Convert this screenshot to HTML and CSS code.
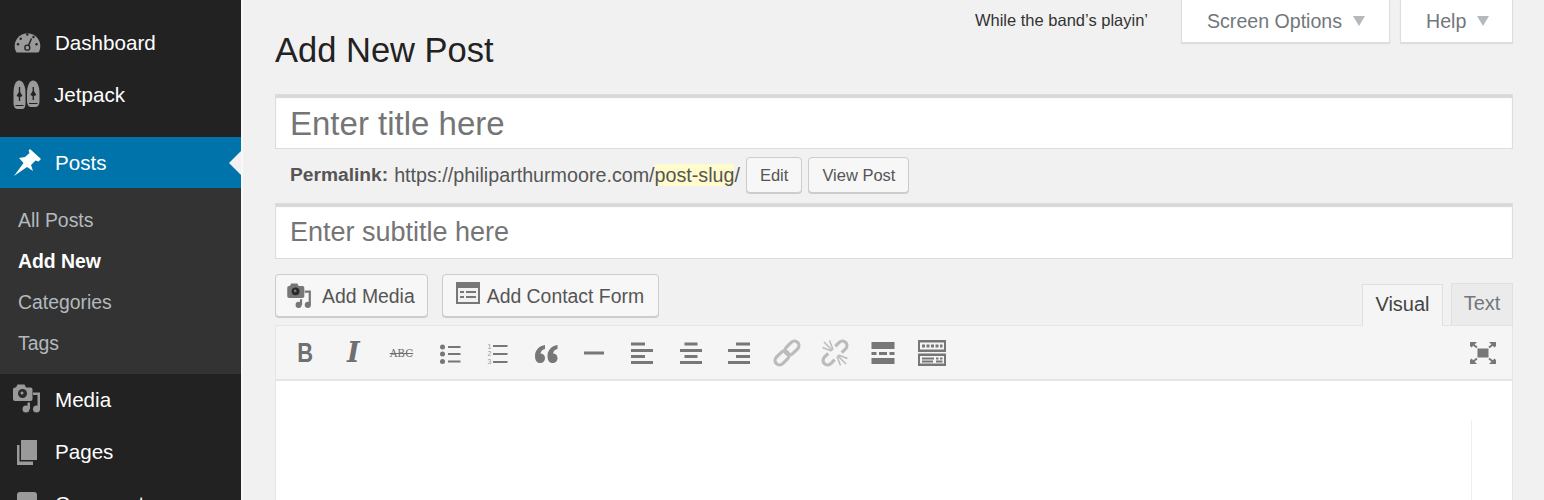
FILE: index.html
```html
<!DOCTYPE html>
<html lang="en">
<head>
    <meta charset="UTF-8">
    <meta name="viewport" content="width=device-width, initial-scale=1.0">
    <title>Add New Post</title>
    <link rel="stylesheet" href="styles.css">
</head>
<body>
    <svg class="defs" width="0" height="0">
        <symbol id="media" viewBox="0 0 28 32">
            <path d="M3 3.500 L4.500 0.500 H11.500 L13 3.500 H17.500 Q19.500 3.500 19.500 5.500 V15 Q19.500 17 17.500 17 H2 Q0 17 0 15 V5.500 Q0 3.500 2 3.500 Z"/>
            <circle cx="9.500" cy="9.500" r="4.500" fill="#2a2a2a"/>
            <circle cx="9" cy="9" r="1.500" fill="currentColor"/>
            <circle cx="13" cy="25" r="3.500"/>
            <path d="M14.500 25 V18.500 H17 V25 Z"/>
            <circle cx="23.500" cy="25" r="3.500"/>
            <path d="M24.500 25 V11 H20 V8.500 H27 V25 Z"/>
        </symbol>
    </svg>

    <div class="page">
        <nav class="sidebar">
            <a class="menu-item">
                <svg class="menu-icon" viewBox="0 0 28 28">
                    <path d="M4.500 23.500 Q3 23.500 2.700 22 A12.800 12.800 0 1 1 26.300 22 Q26 23.500 24.500 23.500 Z"/>
                    <g fill="#222">
                        <circle cx="14.300" cy="5.500" r="1.200"/>
                        <circle cx="7.700" cy="9.700" r="1.200"/>
                        <circle cx="20.500" cy="8" r="1.200"/>
                        <circle cx="5" cy="15.300" r="1.200"/>
                        <circle cx="23.500" cy="15.300" r="1.200"/>
                    </g>
                    <circle cx="14.300" cy="18.700" r="2.500" fill="none" stroke="#222" stroke-width="1.300"/>
                    <path d="M15.500 16.500 L18.500 9.500" stroke="#222" stroke-width="1.500"/>
                </svg>
                Dashboard
            </a>
            <a class="menu-item menu-jet">
                <svg class="menu-icon" viewBox="0 0 28 32">
                    <path d="M6 0.500 C10 0.500 12.500 6 12.500 13 V23 C12.500 26 11.500 29 9.500 29 H4 C2 29 0.500 26 0.500 23 V13 C0.500 6 2.500 0.500 6 0.500 Z"/>
                    <path d="M20 0.500 C24 0.500 26.500 6 26.500 13 V21 C26.500 24 25 27 23 27 H17.500 C15.500 27 14 24 14 21 V13 C14 6 16.500 0.500 20 0.500 Z"/>
                    <g fill="#222">
                        <path d="M5.800 7 H7.200 V21 H5.800 Z M3.500 16 L5.800 12 V17 Z M9.500 16 L7.200 12 V17 Z"/>
                        <path d="M19.600 7 H21 V20 H19.600 Z M17.300 15 L19.600 11 V16 Z M23.300 15 L21 11 V16 Z"/>
                        <path d="M2.500 25 H10.500 V26 H2.500 Z M16 23 H24.500 V24 H16 Z"/>
                    </g>
                </svg>
                Jetpack
            </a>

            <div class="menu-group">
                <a class="menu-item menu-current">
                    <svg class="menu-icon menu-pin" viewBox="0 0 28 28">
                        <path d="M17 0 L28 10 L25.500 12.500 L22.500 11.500 L18 16 L20 22 L14 18 L1 27 L10.500 14 L6 9 L12 8 L16.500 4 L15.500 1.500 Z"/>
                    </svg>
                    Posts
                </a>
                <div class="submenu">
                    <a>All Posts</a>
                    <a class="sub-current">Add New</a>
                    <a>Categories</a>
                    <a>Tags</a>
                </div>
            </div>

            <a class="menu-item">
                <svg class="menu-icon menu-media"><use href="#media"/></svg>
                Media
            </a>
            <a class="menu-item">
                <svg class="menu-icon" viewBox="0 0 28 28">
                    <path d="M8 2 H24 V22 H8 Z"/>
                    <path d="M4 7 H6.500 V23.500 H20 V27 H4 Z"/>
                </svg>
                Pages
            </a>
            <a class="menu-item">
                <svg class="menu-icon" viewBox="0 0 28 28">
                    <rect x="4" y="2" width="20" height="20" rx="3"/>
                </svg>
                Comments
            </a>
        </nav>

        <main class="content">
            <div class="top-row">
                <h1>Add New Post</h1>
                <p class="dolly">While the band’s playin’</p>
                <div class="screen-tab tab-options">Screen Options <span class="caret"></span></div>
                <div class="screen-tab tab-help">Help <span class="caret"></span></div>
            </div>

            <div class="field field-title">Enter title here</div>

            <div class="permalink">
                <strong>Permalink:</strong>
                <span class="url">https://philiparthurmoore.com/<span class="slug">post-slug</span>/</span>
                <button class="small-btn">Edit</button>
                <button class="small-btn">View Post</button>
            </div>

            <div class="field field-subtitle">Enter subtitle here</div>

            <div class="media-row">
                <button class="media-btn">
                    <svg class="btn-media"><use href="#media"/></svg>
                    Add Media
                </button>
                <button class="media-btn btn-form">
                    <svg class="form-icon" viewBox="0 0 24 22">
                        <rect width="24" height="22" fill="#777"/>
                        <rect x="2" y="6" width="20" height="14" fill="#f1f1f1"/>
                        <path d="M4 9 H8 V11 H4 Z M10 9 H20 V11 H10 Z M4 14 H8 V16 H4 Z M10 14 H20 V16 H10 Z" fill="#777"/>
                    </svg>
                    Add Contact Form
                </button>
                <div class="editor-tabs">
                    <span class="editor-tab tab-active">Visual</span>
                    <span class="editor-tab">Text</span>
                </div>
            </div>

            <div class="toolbar">
                <span class="tool tool-bold"><span>B</span></span>
                <span class="tool tool-italic">I</span>
                <span class="tool tool-strike">ABC</span>
                <span class="tool">
                    <svg viewBox="0 0 28 28">
                        <circle cx="6.500" cy="8" r="2.500"/><circle cx="6.500" cy="15" r="2.500"/><circle cx="6.500" cy="22.500" r="2.500"/>
                        <path d="M12 7 H24.500 V9 H12 Z M12 14 H24.500 V16 H12 Z M12 21.500 H24.500 V23.500 H12 Z"/>
                    </svg>
                </span>
                <span class="tool">
                    <svg viewBox="0 0 28 28">
                        <text class="ol-num" x="3.500" y="10">1</text>
                        <text class="ol-num" x="3.500" y="17">2</text>
                        <text class="ol-num" x="3.500" y="25">3</text>
                        <path d="M9 6 H23.500 V8 H9 Z M9 14 H23.500 V16 H9 Z M9 22 H23.500 V24 H9 Z"/>
                    </svg>
                </span>
                <span class="tool">
                    <svg viewBox="0 0 28 28">
                        <path d="M13 6 C7 7 3 11 3 17 C3 21.500 5 24 8 24 C11 24 13 22 13 19 C13 16 11 14.500 8.500 14.500 C9 12 10.500 10.500 13 10 Z"/>
                        <path d="M25.500 6 C19.500 7 15.500 11 15.500 17 C15.500 21.500 17.500 24 20.500 24 C23.500 24 25.500 22 25.500 19 C25.500 16 23.500 14.500 21 14.500 C21.500 12 23 10.500 25.500 10 Z"/>
                    </svg>
                </span>
                <span class="tool">
                    <svg viewBox="0 0 28 28"><rect x="4" y="12.500" width="20" height="3"/></svg>
                </span>
                <span class="tool">
                    <svg viewBox="0 0 28 28">
                        <path d="M3 3.500 H17 V6.500 H3 Z M3 10 H25 V13 H3 Z M3 16 H17 V19 H3 Z M3 22 H25 V25 H3 Z"/>
                    </svg>
                </span>
                <span class="tool">
                    <svg viewBox="0 0 28 28">
                        <path d="M7.500 3.500 H20.500 V6.500 H7.500 Z M3 10 H25 V13 H3 Z M7.500 16 H20.500 V19 H7.500 Z M3 22 H25 V25 H3 Z"/>
                    </svg>
                </span>
                <span class="tool">
                    <svg viewBox="0 0 28 28">
                        <path d="M11 3.500 H25 V6.500 H11 Z M3 10 H25 V13 H3 Z M11 16 H25 V19 H11 Z M3 22 H25 V25 H3 Z"/>
                    </svg>
                </span>
                <span class="tool">
                    <svg viewBox="0 0 28 28">
                        <g transform="rotate(-45 14 14)" fill="none" stroke="#bbb" stroke-width="3.200">
                            <rect x="-1" y="9.500" width="16" height="9" rx="4.500"/>
                            <rect x="13" y="9.500" width="16" height="9" rx="4.500"/>
                        </g>
                    </svg>
                </span>
                <span class="tool">
                    <svg viewBox="0 0 28 28">
                        <g transform="rotate(-45 14 14)" fill="none" stroke="#bbb" stroke-width="3.200">
                            <path d="M9 9.500 H3.500 A4.500 4.500 0 0 0 3.500 18.500 H9"/>
                            <path d="M19 9.500 H24.500 A4.500 4.500 0 0 1 24.500 18.500 H19"/>
                        </g>
                        <path d="M11.500 11.500 L3 3 M12 10.500 L8.500 1.500 M10.500 12 L1.500 8.500 M16.500 16.500 L25 25 M16 17.500 L19.500 26.500 M17.500 16 L26.500 19.500" stroke="#bbb" stroke-width="1.500"/>
                    </svg>
                </span>
                <span class="tool">
                    <svg viewBox="0 0 28 28">
                        <path d="M2.500 3 H25.500 V10 H2.500 Z M2.500 13 H7.500 V16 H2.500 Z M10 13 H18 V16 H10 Z M20.500 13 H25.500 V16 H20.500 Z M2.500 19 H25.500 V25 H2.500 Z"/>
                    </svg>
                </span>
                <span class="tool">
                    <svg viewBox="0 0 28 28">
                        <path fill-rule="evenodd" d="M0 1 H28 V13 H0 Z M2 3.500 V10.500 H26 V3.500 Z M0 14.500 H28 V27 H0 Z M2 17 V24.500 H26 V17 Z"/>
                        <path d="M4 5.500 H7 V8.500 H4 Z M8.500 5.500 H11.500 V8.500 H8.500 Z M13 5.500 H16 V8.500 H13 Z M17.500 5.500 H20.500 V8.500 H17.500 Z M22 5.500 H24.500 V8.500 H22 Z"/>
                        <path d="M4 18.500 H16 V20.500 H4 Z M18 18.500 H20.500 V20.500 H18 Z M22 18.500 H24.500 V20.500 H22 Z M4 21.500 H15 V23.500 H4 Z M18 21.500 H24.500 V23.500 H18 Z"/>
                    </svg>
                </span>
                <span class="tool tool-full">
                    <svg viewBox="0 0 28 28">
                        <rect x="8.500" y="9.500" width="11" height="9"/>
                        <path d="M8 8.500 L3.500 5 M20 8.500 L24.500 5 M8 19.500 L3.500 23 M20 19.500 L24.500 23" stroke="#777" stroke-width="2"/>
                        <path d="M1 3 H8 L2.500 8.500 L1 7 Z M27 3 H20 L25.500 8.500 L27 7 Z M1 25 H8 L2.500 19.500 L1 21 Z M27 25 H20 L25.500 19.500 L27 21 Z"/>
                    </svg>
                </span>
            </div>

            <div class="editor">
                <div class="editor-body"></div>
            </div>
        </main>
    </div>
</body>
</html>
```

FILE: styles.css
```css
html, body {
    margin: 0;
    height: 500px;
    overflow: hidden;
}
body {
    font-family: "Liberation Sans", Arial, sans-serif;
    background: #f1f1f1;
    color: #444;
}
.defs {
    position: absolute;
}
.page {
    display: flex;
    height: 500px;
}

/* sidebar */
.sidebar {
    flex: 0 0 241px;
    box-sizing: border-box;
    padding-top: 17px;
    background: #222;
    overflow: hidden;
}
.menu-item {
    display: flex;
    align-items: center;
    height: 52px;
    padding-left: 13px;
    color: #fff;
    font-size: 20.6px;
}
.menu-icon {
    flex: none;
    width: 28px;
    height: 28px;
    margin-right: 14px;
    fill: #9a9a9a;
    color: #9a9a9a;
}
.menu-jet .menu-icon {
    height: 32px;
    margin-top: 2px;
    margin-right: 13px;
}
.menu-media {
    height: 32px;
}
.menu-group {
    margin-top: 16px;
}
.menu-current {
    position: relative;
    height: 51px;
    background: #0073aa;
}
.menu-current::after {
    content: "";
    position: absolute;
    right: 0;
    top: 14px;
    border: 12px solid transparent;
    border-left: 0;
    border-right-color: #f1f1f1;
}
.menu-current .menu-pin {
    fill: #fff;
}
.submenu {
    display: flex;
    flex-direction: column;
    height: 186px;
    box-sizing: border-box;
    padding: 12px 0 11px 18px;
    background: #333;
    color: #b4b9be;
    font-size: 19.4px;
}
.submenu a {
    height: 41px;
    line-height: 41px;
}
.submenu .sub-current {
    color: #fff;
    font-weight: bold;
}

/* content */
.content {
    flex: 1;
    min-width: 0;
    box-sizing: border-box;
    padding: 0 31px 0 32px;
    border-left: 2px solid #f8f8f8;
}
.top-row {
    display: flex;
    align-items: flex-start;
    height: 94px;
}
h1 {
    flex: 1;
    margin: 30px 0 0;
    color: #222;
    font-size: 34.5px;
    font-weight: normal;
    line-height: 40px;
}
.dolly {
    margin: 11px 33px 0 0;
    color: #333;
    font-size: 16.5px;
    line-height: 19px;
}
.screen-tab {
    display: flex;
    align-items: center;
    gap: 11px;
    box-sizing: border-box;
    height: 43px;
    padding: 0 0 0 25px;
    background: #fff;
    border: 1px solid #ddd;
    border-top: 0;
    box-shadow: 0 1px 1px rgba(0, 0, 0, 0.08);
    color: #72777c;
    font-size: 19.6px;
    white-space: nowrap;
}
.tab-options {
    width: 209px;
    margin-right: 10px;
}
.tab-help {
    width: 113px;
}
.caret {
    border: 6.5px solid transparent;
    border-top: 10px solid #b4b9be;
    border-bottom: 0;
}

.field {
    box-sizing: border-box;
    padding-left: 14px;
    background: #fff;
    border: 1px solid #ddd;
    box-shadow: inset 0 3px 1px #d8d8d8;
    color: #757575;
}
.field-title {
    height: 55px;
    padding-top: 3px;
    font-size: 33px;
    line-height: 51px;
}
.field-subtitle {
    height: 56px;
    padding-top: 2px;
    font-size: 27px;
    line-height: 52px;
}
.permalink {
    display: flex;
    align-items: center;
    gap: 6px;
    box-sizing: border-box;
    height: 54px;
    padding: 0 0 2px 15px;
    color: #555;
    font-size: 19.2px;
}
.url {
    font-size: 19.7px;
}
.slug {
    background: #fffbcc;
}
.small-btn {
    height: 36px;
    padding: 0 13px;
    background: #f7f7f7;
    border: 1px solid #ccc;
    border-radius: 4px;
    box-shadow: 0 1px 0 #ccc;
    color: #555;
    font-family: inherit;
    font-size: 16.5px;
}

.media-row {
    display: flex;
    align-items: flex-end;
    height: 66px;
}
.media-btn {
    display: flex;
    align-items: center;
    gap: 10px;
    box-sizing: border-box;
    height: 43px;
    margin-bottom: 8px;
    padding: 1px 12px 0 11px;
    background: #f7f7f7;
    border: 1px solid #ccc;
    border-radius: 4px;
    box-shadow: 0 1px 0 #ccc;
    color: #555;
    font-family: inherit;
    font-size: 19.4px;
}
.btn-form {
    gap: 7px;
    margin-left: 14px;
    padding: 1px 14px 0 13px;
}
.btn-media {
    width: 25px;
    height: 28px;
    margin-top: 2px;
    fill: #777;
    color: #777;
}
.form-icon {
    width: 24px;
    height: 22px;
    margin-top: -6px;
}
.editor-tabs {
    display: flex;
    gap: 8px;
    margin-left: auto;
}
.editor-tab {
    box-sizing: border-box;
    width: 62px;
    height: 42px;
    background: #ebebeb;
    border: 1px solid #e0e0e0;
    border-bottom: 0;
    color: #72777c;
    font-size: 20px;
    line-height: 39px;
    text-align: center;
}
.tab-active {
    position: relative;
    top: 1px;
    width: 81px;
    background: #f5f5f5;
    color: #444;
}

.toolbar {
    display: flex;
    align-items: center;
    box-sizing: border-box;
    height: 56px;
    padding: 0 5px;
    background: #f5f5f5;
    border: 1px solid #e5e5e5;
    border-bottom-width: 2px;
}
.tool {
    display: flex;
    flex: 0 0 48.2px;
    align-items: center;
    justify-content: center;
    height: 28px;
    color: #6f6f6f;
}
.tool svg {
    width: 28px;
    height: 28px;
    fill: #777;
}
.tool-bold span {
    font-size: 28px;
    font-weight: bold;
    transform: scaleX(0.78);
}
.tool-italic {
    font-family: "DejaVu Serif", serif;
    font-size: 27px;
    font-style: italic;
    font-weight: bold;
}
.tool-strike {
    font-family: "DejaVu Serif", serif;
    font-size: 10.5px;
    text-decoration: line-through;
}
.ol-num {
    font-size: 7px;
    fill: #999;
}
.tool-full {
    margin-left: auto;
}

.editor {
    box-sizing: border-box;
    height: 125px;
    padding-top: 39px;
    background: #fff;
    border: 1px solid #e5e5e5;
    border-top: 0;
}
.editor-body {
    height: 85px;
    margin-right: 40px;
    border-right: 1px solid #eee;
}
```
